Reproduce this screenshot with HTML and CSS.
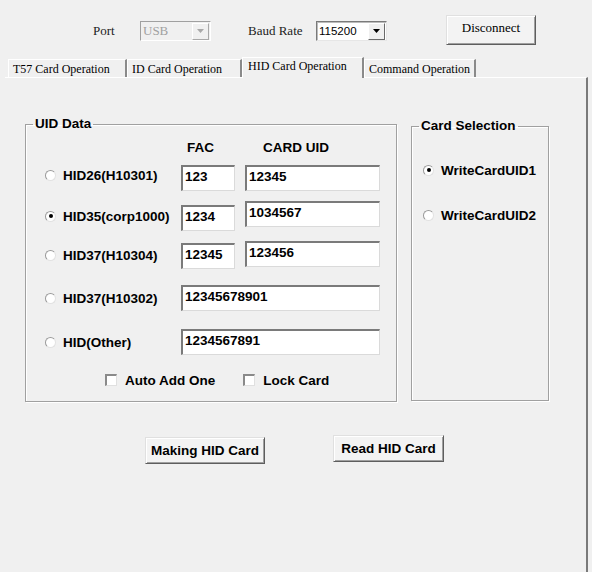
FILE: index.html
```html
<!DOCTYPE html>
<html lang="en">
<head>
  <meta charset="UTF-8" />
  <title>HID Card Operation</title>
  <link rel="stylesheet" href="styles.css">
</head>
<body>

<!-- Connection bar -->
<div class="toolbar">
  <span class="tool-label port-label">Port</span>
  <div class="combo combo-disabled">
    <span class="combo-text">USB</span>
    <span class="combo-btn"><svg width="7" height="4" viewBox="0 0 7 4"><path d="M0 0h7L3.5 4z"/></svg></span>
  </div>
  <span class="tool-label baud-label">Baud Rate</span>
  <div class="combo">
    <span class="combo-text combo-num">115200</span>
    <span class="combo-btn"><svg width="7" height="4" viewBox="0 0 7 4"><path d="M0 0h7L3.5 4z"/></svg></span>
  </div>
  <button class="btn btn-serif btn-disconnect">Disconnect</button>
</div>

<!-- Tabs -->
<div class="tabs">
  <div class="tab tab-t57">T57 Card Operation</div>
  <div class="tab tab-id">ID Card Operation</div>
  <div class="tab tab-hid tab-active">HID Card Operation</div>
  <div class="tab tab-cmd">Command Operation</div>
</div>

<div class="panel">
  <div class="groups">

    <fieldset class="group uid-group">
      <legend>UID Data</legend>
      <div class="group-body uid-body">

        <div class="row head">
          <span></span>
          <span class="head-fac">FAC</span>
          <span class="head-uid">CARD UID</span>
        </div>

        <div class="row row-1">
          <label class="opt"><span class="radio"></span>HID26(H10301)</label>
          <input class="field" type="text" value="123">
          <input class="field" type="text" value="12345">
        </div>

        <div class="row row-2">
          <label class="opt"><span class="radio checked"></span>HID35(corp1000)</label>
          <input class="field fac-low" type="text" value="1234">
          <input class="field uid-high" type="text" value="1034567">
        </div>

        <div class="row row-3">
          <label class="opt"><span class="radio"></span>HID37(H10304)</label>
          <input class="field fac-low" type="text" value="12345">
          <input class="field uid-high" type="text" value="123456">
        </div>

        <div class="row row-4">
          <label class="opt"><span class="radio"></span>HID37(H10302)</label>
          <input class="field wide" type="text" value="12345678901">
        </div>

        <div class="row row-5">
          <label class="opt"><span class="radio"></span>HID(Other)</label>
          <input class="field wide" type="text" value="1234567891">
        </div>

        <div class="checks">
          <label class="check"><span class="box"></span>Auto Add One</label>
          <label class="check check-lock"><span class="box"></span>Lock Card</label>
        </div>
      </div>
    </fieldset>

    <fieldset class="group sel-group">
      <legend>Card Selection</legend>
      <div class="group-body sel-body">
        <label class="sel-opt"><span class="radio checked"></span>WriteCardUID1</label>
        <label class="sel-opt"><span class="radio"></span>WriteCardUID2</label>
      </div>
    </fieldset>

  </div>

  <div class="actions">
    <button class="btn btn-make">Making HID Card</button>
    <button class="btn btn-read">Read HID Card</button>
  </div>
</div>

</body>
</html>
```

FILE: styles.css
```css
body {
  margin: 0;
  width: 592px;
  height: 572px;
  overflow: hidden;
  background: #f0f0f0;
  color: #000;
  font-family: "Liberation Sans", Arial, sans-serif;
  font-size: 13.5px;
  font-weight: bold;
}

/* connection bar */
.toolbar {
  display: flex;
  align-items: center;
  height: 29px;
  padding: 15px 0 0 93px;
  font-family: "Liberation Serif", "Times New Roman", serif;
  font-size: 13px;
  font-weight: normal;
}

.tool-label {
  color: #222;
  margin-top: 2px;
}

.port-label {
  width: 47px;
}

.baud-label {
  width: 68px;
  margin-left: 37px;
}

.combo {
  box-sizing: border-box;
  display: flex;
  align-items: center;
  justify-content: space-between;
  width: 71px;
  height: 20px;
  margin-top: 3px;
  background: #fff;
  border-style: solid;
  border-width: 1px;
  border-color: #7a7a7a #e6e6e6 #e6e6e6 #7a7a7a;
  box-shadow: inset 1px 1px 0 #bcbcbc;
}

.combo-text {
  padding-left: 2px;
  line-height: 16px;
}

.combo-num {
  font-family: "Liberation Sans", Arial, sans-serif;
  font-size: 11.5px;
}

.combo-btn {
  box-sizing: border-box;
  display: flex;
  align-items: center;
  justify-content: center;
  width: 17px;
  height: 17px;
  margin-right: 1px;
  background: #f0f0f0;
  border-style: solid;
  border-width: 1px;
  border-color: #fff #6a6a6a #6a6a6a #fff;
}

.combo-btn svg {
  fill: #000;
}

.combo-disabled {
  background: #f0f0f0;
  color: #a0a0a0;
  border-color: #a0a0a0 #fff #fff #a0a0a0;
  box-shadow: none;
}

.combo-disabled .combo-btn {
  border-color: #fff #a8a8a8 #a8a8a8 #fff;
}

.combo-disabled .combo-btn svg {
  fill: #a8a8a8;
}

/* buttons */
.btn {
  box-sizing: border-box;
  height: 27px;
  padding: 0;
  background: #f3f3f3;
  color: #000;
  font-family: "Liberation Sans", Arial, sans-serif;
  font-size: 13.5px;
  font-weight: bold;
  border-style: solid;
  border-width: 1px;
  border-color: #e0e0e0 #5e5e5e #5e5e5e #e0e0e0;
  box-shadow: inset 1px 1px 0 #fff, inset -1px -1px 0 #a0a0a0;
  cursor: pointer;
}

.btn-serif {
  font-family: "Liberation Serif", "Times New Roman", serif;
  font-size: 13px;
  font-weight: normal;
}

.btn-disconnect {
  width: 90px;
  height: 30px;
  margin-left: 59px;
  padding-bottom: 3px;
}

/* tabs */
.tabs {
  display: flex;
  align-items: flex-end;
  height: 20px;
  margin-top: 13px;
  padding-left: 8px;
  font-family: "Liberation Serif", "Times New Roman", serif;
  font-size: 12px;
  font-weight: normal;
}

.tab {
  box-sizing: border-box;
  height: 18px;
  padding-left: 4px;
  line-height: 18px;
  white-space: nowrap;
  background: #f0f0f0;
  border-top: 1px solid #fff;
  border-left: 1px solid #fff;
  border-right: 2px solid #8a8a8a;
}

.tab-t57 { width: 119px; }
.tab-id { width: 115px; }
.tab-hid { width: 122px; }
.tab-cmd { width: 112px; }

.tab-active {
  position: relative;
  z-index: 1;
  height: 21px;
  margin-bottom: -1px;
  padding-left: 5px;
  line-height: 17px;
}

/* tab page */
.panel {
  box-sizing: border-box;
  height: 495px;
  margin: 0 4px 0 5px;
  padding: 38px 0 0 20px;
  border-top: 1px solid #fff;
  border-right: 2px solid #7a7a7a;
}

.groups {
  display: flex;
  align-items: stretch;
  gap: 14px;
}

.group {
  box-sizing: border-box;
  min-width: 0;
  margin: 0;
  padding: 0;
  border: 1px solid #a0a0a0;
  box-shadow: 1px 1px 0 #fff, inset 1px 1px 0 #fff;
}

.group legend {
  margin-left: 7px;
  padding: 0 2px;
  line-height: 16px;
}

.uid-group {
  width: 372px;
}

.uid-body {
  padding: 7px 0 13px 19px;
}

.sel-group {
  width: 138px;
  margin: 2px 0 1px;
}

.sel-body {
  padding: 27px 0 0 11px;
}

.row {
  display: grid;
  grid-template-columns: 126px 54px 135px;
  column-gap: 10px;
  align-items: center;
}

.head {
  height: 16px;
  margin-bottom: 10px;
}

.head-fac { padding-left: 6px; }
.head-uid { padding-left: 18px; }

.row-1 { height: 26px; margin-bottom: 10px; }
.row-2 { height: 30px; margin-bottom: 10px; }
.row-3 { height: 28px; margin-bottom: 16px; }
.row-4 { height: 26px; margin-bottom: 18px; }
.row-5 { height: 26px; margin-bottom: 17px; }

.row-1 .opt { margin-bottom: 6px; }

.fac-low { align-self: end; }
.uid-high { align-self: start; }

.opt,
.sel-opt,
.check {
  display: flex;
  align-items: center;
  gap: 7px;
  white-space: nowrap;
  cursor: pointer;
}

.field {
  box-sizing: border-box;
  width: 100%;
  height: 26px;
  margin: 0;
  padding: 0 2px 4px;
  background: #fff;
  color: #000;
  font-family: "Liberation Sans", Arial, sans-serif;
  font-size: 13.5px;
  font-weight: bold;
  border-style: solid;
  border-width: 2px 1px 1px 2px;
  border-color: #7a7a7a #dadada #dadada #7a7a7a;
  outline: none;
}

.wide {
  grid-column: 2 / 4;
}

/* radio and check marks */
.radio {
  box-sizing: border-box;
  display: flex;
  align-items: center;
  justify-content: center;
  width: 11px;
  height: 11px;
  border-radius: 50%;
  background: #fff;
  border: 1px solid;
  border-color: #9a9a9a #e2e2e2 #e2e2e2 #9a9a9a;
}

.radio.checked::after {
  content: "";
  width: 4px;
  height: 4px;
  border-radius: 50%;
  background: #000;
}

.checks {
  display: flex;
  align-items: center;
  height: 16px;
  padding-left: 60px;
}

.check {
  gap: 8px;
}

.check-lock {
  margin-left: 28px;
}

.box {
  box-sizing: border-box;
  width: 12px;
  height: 12px;
  background: #fff;
  border-style: solid;
  border-width: 2px 1px 1px 2px;
  border-color: #8a8a8a #e0e0e0 #e0e0e0 #8a8a8a;
}

.sel-opt {
  height: 18px;
  margin-bottom: 27px;
}

/* action buttons */
.actions {
  display: flex;
  align-items: flex-start;
  gap: 68px;
  margin-top: 33px;
  padding-left: 120px;
}

.btn-make {
  width: 120px;
  margin-top: 2px;
}

.btn-read {
  width: 111px;
}
```
